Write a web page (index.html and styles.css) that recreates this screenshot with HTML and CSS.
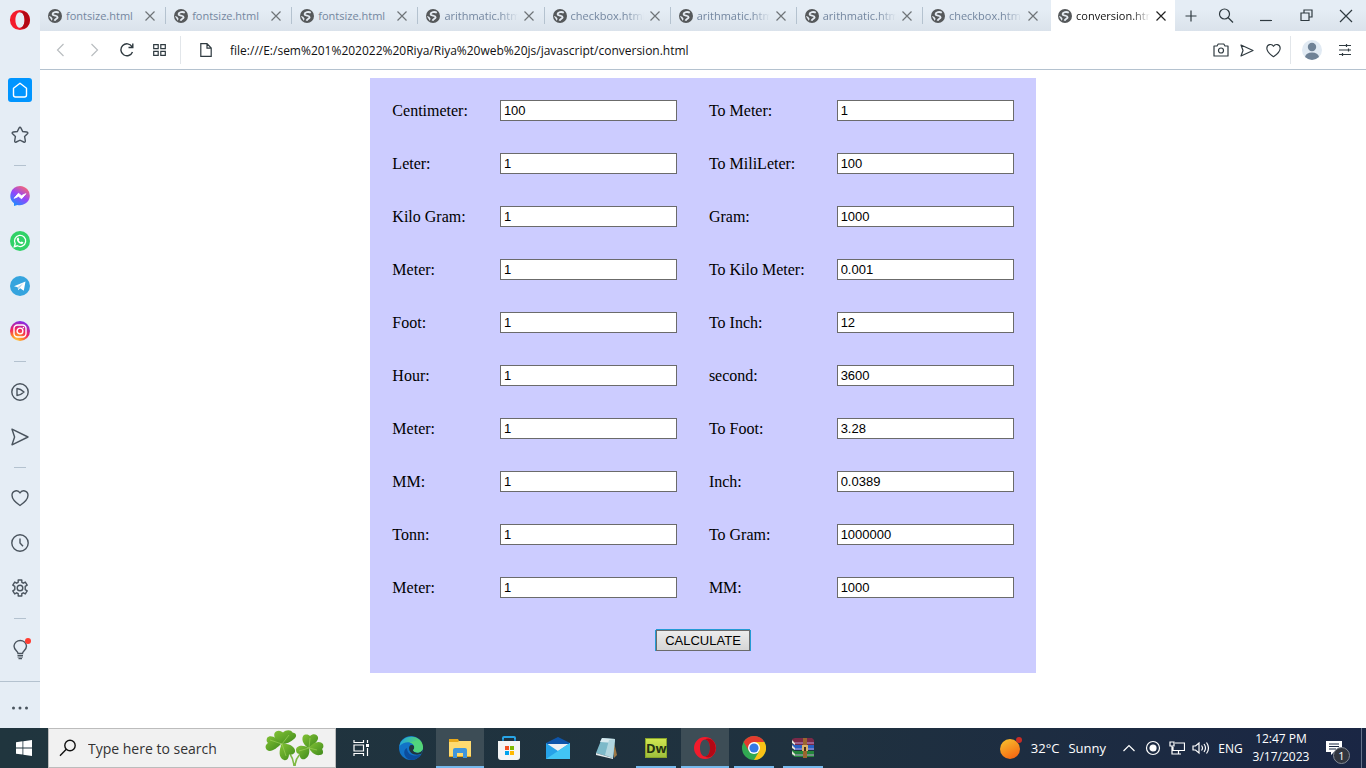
FILE: index.html
```html
<!DOCTYPE html>
<html lang="en">
<head>
<meta charset="utf-8">
<title>conversion.html</title>
<link rel="stylesheet" href="styles.css">
</head>
<body>
<svg class="defs" aria-hidden="true">
  <symbol id="globe" viewBox="0 0 14 14"><circle cx="7" cy="7" r="7" fill="#55585a"/><path d="M10.800 3.700C8.500 2.300 4.800 3.200 4.600 5.200c0 1.800 5 1.200 5 3 0 1.500-2.600 1.500-3 3.600" fill="none" stroke="#e5ebf2" stroke-width="1.900"/><path d="M.8 7l2.400.8 1.400 2-.8 2z" fill="#e5ebf2"/></symbol>
  <symbol id="cross" viewBox="0 0 12 12"><path d="M1.500 1.500l9 9M10.500 1.500l-9 9" fill="none" stroke="currentColor" stroke-width="1.200"/></symbol>
  <symbol id="heart" viewBox="0 0 18 18"><path d="M9 16.500C6 14.500 1 10.500 1 6.300 1 1.500 7 .3 9 4c2-3.700 8-2.500 8 2.300 0 4.200-5 8.200-8 10.200z" fill="none" stroke="currentColor" stroke-width="1.400" stroke-linejoin="round"/></symbol>
  <symbol id="send" viewBox="0 0 18 18"><path d="M1 1.200L17 9 1 16.800 3.600 9z" fill="none" stroke="currentColor" stroke-width="1.400" stroke-linejoin="round"/></symbol>
  <symbol id="opera" viewBox="0 0 24 24"><path fill-rule="evenodd" d="M12 1a11 11 0 1 0 0 22a11 11 0 1 0 0-22zM12 3.500c3 0 5 3.800 5 8.500s-2 8.500-5 8.500S7 16.700 7 12s2-8.500 5-8.500z" fill="#f31b2c"/><path d="M12 3.500c3-2 6-.6 8 1.200a11 11 0 0 1 0 14.600c-2 1.900-5 3.200-8 1.200 3 0 5-3.800 5-8.500s-2-8.500-5-8.500z" fill="#b30815"/></symbol>
</svg>
<div class="browser">
  <nav class="sidebar" aria-label="Sidebar">
    <button class="menu" aria-label="Opera menu"><svg width="22" height="22"><use href="#opera"/></svg></button>
    <button class="side" aria-label="Home"><svg width="24" height="24" viewBox="0 0 24 24"><rect width="24" height="24" rx="3" fill="#0095ff"/><path d="M5.500 10.300L12 5.200l6.500 5.100v6.700q0 2-2 2h-9q-2 0-2-2z" fill="none" stroke="#fff" stroke-width="1.400" stroke-linejoin="round"/></svg></button>
    <button class="side" aria-label="Speed dials"><svg width="18" height="18" viewBox="0 0 18 18"><path d="M8 2.200q1-1.800 2 0l1.700 3.300 4 .5q1.900.4.7 1.800l-2.800 2.800.7 4.100q.2 2-1.600 1.300L9 14.200 5.300 16q-1.800.7-1.600-1.300l.7-4.100-2.800-2.800Q.4 6.400 2.300 6l4-.5z" fill="none" stroke="currentColor" stroke-width="1.400"/></svg></button>
    <hr>
    <button class="side" aria-label="Messenger"><svg width="20" height="20" viewBox="0 0 20 20"><defs><linearGradient id="ms" x1=".2" y1="1" x2=".8" y2="0"><stop offset="0" stop-color="#1593ff"/><stop offset=".5" stop-color="#9445fb"/><stop offset="1" stop-color="#ff6a68"/></linearGradient></defs><path d="M10 0a10 9.600 0 1 1-2.700 18.900L4 20v-2.800A9.700 9.700 0 0 1 10 0z" fill="url(#ms)"/><path d="M4.200 12.300l4.200-5 3 2.400 4.400-2-4.200 5-3-2.400z" fill="#fff" stroke="#fff"/></svg></button>
    <button class="side" aria-label="WhatsApp"><svg width="20" height="20" viewBox="0 0 20 20"><circle cx="10" cy="10" r="10" fill="#30d267"/><path d="M4.300 15.700l.9-3.100a5.600 5.600 0 1 1 2.200 2.200z" fill="none" stroke="#fff" stroke-width="1.300"/><path d="M7.500 6.800l1-.2.800 1.900-.6.800q.8 1.500 2.100 2l.8-.9 1.800.9q0 1.700-1.700 1.800-4.300-.6-5-5z" fill="#fff"/></svg></button>
    <button class="side" aria-label="Telegram"><svg width="20" height="20" viewBox="0 0 20 20"><circle cx="10" cy="10" r="10" fill="#35a4de"/><path d="M4 10.200L15.500 5.500l-1.700 9.300-3.700-2.500-1.900 1.900-.5-3z" fill="#fff"/><path d="M7.800 11l5.500-3.700-3.800 4.600-1.300 2.200z" fill="#b8d7ea"/></svg></button>
    <button class="side" aria-label="Instagram"><svg width="20" height="20" viewBox="0 0 20 20"><defs><radialGradient id="ig" cx=".3" cy="1.050" r="1.100"><stop offset="0" stop-color="#ffdc50"/><stop offset=".3" stop-color="#ff8b24"/><stop offset=".6" stop-color="#f2215f"/><stop offset="1" stop-color="#7b2cf5"/></radialGradient></defs><circle cx="10" cy="10" r="10" fill="url(#ig)"/><rect x="4" y="4" width="12" height="12" rx="3.500" fill="none" stroke="#fff" stroke-width="1.400"/><circle cx="10" cy="10" r="2.900" fill="none" stroke="#fff" stroke-width="1.400"/><circle cx="13.400" cy="6.600" r=".8" fill="#fff"/></svg></button>
    <hr>
    <button class="side" aria-label="Player"><svg width="18" height="18" viewBox="0 0 18 18"><g fill="none" stroke="currentColor" stroke-width="1.400"><circle cx="9" cy="9" r="8.200"/><path d="M6 5.500q3.500.2 7 3.500-3.500 3.300-7 3.500z" stroke-linejoin="round"/></g></svg></button>
    <button class="side" aria-label="My Flow"><svg width="18" height="18"><use href="#send"/></svg></button>
    <hr>
    <button class="side" aria-label="Bookmarks"><svg width="18" height="18"><use href="#heart"/></svg></button>
    <button class="side" aria-label="History"><svg width="18" height="18" viewBox="0 0 18 18"><g fill="none" stroke="currentColor" stroke-width="1.400"><circle cx="9" cy="9" r="8.200"/><path d="M9 4.500V9l3 3.300"/></g></svg></button>
    <button class="side" aria-label="Settings"><svg width="18" height="18" viewBox="0 0 18 18"><g fill="none" stroke="currentColor" stroke-width="1.400" stroke-linejoin="round"><path d="M7.200 1h3.600v2.300l1.500.9 2-1.100 1.900 3-2 1.300v3.200l2 1.300-1.900 3-2-1.100-1.500.9V17H7.200v-2.300l-1.500-.9-2 1.100-1.900-3 2-1.300V7.400l-2-1.300 1.900-3 2 1.100 1.500-.9z"/><circle cx="9" cy="9" r="2.800"/></g></svg></button>
    <hr>
    <button class="side" aria-label="Tips"><svg width="22" height="22" viewBox="0 0 22 22"><path d="M9 15.500c0-2.500-4-3.500-4-7.500a6.300 6.300 0 0 1 12.500 0c0 4-4 5-4 7.500z" fill="none" stroke="currentColor" stroke-width="1.400"/><path d="M8.500 17.500h5.500M8.500 19h5.500M9.500 20.700h3.500" stroke="currentColor" stroke-width="1.200"/><circle cx="19" cy="3" r="3" fill="#ff3b30"/></svg></button>
    <button class="more" aria-label="More"><svg width="18" height="4" viewBox="0 0 18 4" fill="currentColor"><circle cx="2.500" cy="2" r="1.500"/><circle cx="9" cy="2" r="1.500"/><circle cx="15.500" cy="2" r="1.500"/></svg></button>
  </nav>

  <div class="window">
    <header class="tabbar">
      <div class="tabs">
        <div class="tab"><svg class="fav"><use href="#globe"/></svg><a href="#">fontsize.html</a><button aria-label="Close tab"><svg><use href="#cross"/></svg></button></div>
        <div class="tab"><svg class="fav"><use href="#globe"/></svg><a href="#">fontsize.html</a><button aria-label="Close tab"><svg><use href="#cross"/></svg></button></div>
        <div class="tab"><svg class="fav"><use href="#globe"/></svg><a href="#">fontsize.html</a><button aria-label="Close tab"><svg><use href="#cross"/></svg></button></div>
        <div class="tab long"><svg class="fav"><use href="#globe"/></svg><a href="#">arithmatic.html</a><button aria-label="Close tab"><svg><use href="#cross"/></svg></button></div>
        <div class="tab long"><svg class="fav"><use href="#globe"/></svg><a href="#">checkbox.html</a><button aria-label="Close tab"><svg><use href="#cross"/></svg></button></div>
        <div class="tab long"><svg class="fav"><use href="#globe"/></svg><a href="#">arithmatic.html</a><button aria-label="Close tab"><svg><use href="#cross"/></svg></button></div>
        <div class="tab long"><svg class="fav"><use href="#globe"/></svg><a href="#">arithmatic.html</a><button aria-label="Close tab"><svg><use href="#cross"/></svg></button></div>
        <div class="tab long"><svg class="fav"><use href="#globe"/></svg><a href="#">checkbox.html</a><button aria-label="Close tab"><svg><use href="#cross"/></svg></button></div>
        <div class="tab long active"><svg class="fav"><use href="#globe"/></svg><a href="#">conversion.html</a><button aria-label="Close tab"><svg><use href="#cross"/></svg></button></div>
      </div>
      <div class="controls">
        <button class="narrow" aria-label="New tab"><svg width="12" height="12" viewBox="0 0 12 12"><path d="M6 .5v11M.5 6h11"/></svg></button>
        <button aria-label="Search tabs"><svg width="16" height="16" viewBox="0 0 16 16"><circle cx="6.500" cy="6" r="5"/><path d="M10 9.500l5 5"/></svg></button>
        <button aria-label="Minimize"><svg width="12" height="12" viewBox="0 0 12 12"><path d="M0 10.500h12"/></svg></button>
        <button aria-label="Restore"><svg width="13" height="13" viewBox="0 0 13 13"><path d="M4 4V1h8v7H9M1 4h8v7.500H1z"/></svg></button>
        <button aria-label="Close"><svg width="14" height="14" viewBox="0 0 14 14"><path d="M1 1l12 12M13 1L1 13"/></svg></button>
      </div>
    </header>

    <div class="address">
      <button class="off" aria-label="Back"><svg width="14" height="14" viewBox="0 0 14 14"><path d="M9.500 1l-6 6 6 6"/></svg></button>
      <button class="off" aria-label="Forward"><svg width="14" height="14" viewBox="0 0 14 14"><path d="M4.500 1l6 6-6 6"/></svg></button>
      <button aria-label="Reload"><svg width="14" height="14" viewBox="0 0 14 14"><path d="M12.500 9A6 6 0 1 1 12 3.600M12.800.5V4.500H8.500" stroke-width="1.400"/></svg></button>
      <button aria-label="Speed Dial"><svg width="13" height="12" viewBox="0 0 13 12"><path d="M.7.700h4.500v4H.7zM7.800.700h4.500v4H7.800zM.7 7.300h4.500v4H.7zM7.800 7.300h4.500v4H7.800z"/></svg></button>
      <span class="rule"></span>
      <svg class="doc" width="12" height="14" viewBox="0 0 12 14"><path d="M.8.700H7l4.200 4.400v8.200H.8zM7 .7v4.400h4.200"/></svg>
      <input type="text" aria-label="Address" value="file:///E:/sem%201%202022%20Riya/Riya%20web%20js/javascript/conversion.html">
      <div class="tools">
        <button aria-label="Snapshot"><svg width="16" height="14" viewBox="0 0 16 14"><path d="M1 3h3l1.200-2h5.600L12 3h3v10H1z" stroke-linejoin="round"/><circle cx="8" cy="7.500" r="2.500"/></svg></button>
        <button aria-label="Send to My Flow"><svg width="14" height="13" viewBox="0 0 14 13"><path d="M1 1l12 5.500L1 12l2-5.500z" stroke-linejoin="round"/></svg></button>
        <button aria-label="Bookmark"><svg width="15" height="15"><use href="#heart"/></svg></button>
      </div>
      <span class="rule"></span>
      <button class="profile" aria-label="Profile"><svg class="flat" width="20" height="20" viewBox="0 0 20 20"><circle cx="10" cy="10" r="10" fill="#e1eaf3"/><circle cx="10" cy="7" r="4.200" fill="#6f8296"/><path d="M3 17q1-4.500 7-4.500t7 4.500q-7 6-14 0z" fill="#6f8296"/></svg></button>
      <button aria-label="Easy setup"><svg width="12" height="12" viewBox="0 0 12 12"><path d="M0 1.500h12M0 6h12M0 10.500h12M7.500 0v3M9.500 4.500v3M3.500 9v3"/></svg></button>
    </div>

    <main>
      <form>
        <table>
          <tr><td><label for="a1">Centimeter:</label></td><td><input id="a1" type="text" value="100"></td><td><label for="b1">To Meter:</label></td><td><input id="b1" type="text" value="1"></td></tr>
          <tr><td><label for="a2">Leter:</label></td><td><input id="a2" type="text" value="1"></td><td><label for="b2">To MiliLeter:</label></td><td><input id="b2" type="text" value="100"></td></tr>
          <tr><td><label for="a3">Kilo Gram:</label></td><td><input id="a3" type="text" value="1"></td><td><label for="b3">Gram:</label></td><td><input id="b3" type="text" value="1000"></td></tr>
          <tr><td><label for="a4">Meter:</label></td><td><input id="a4" type="text" value="1"></td><td><label for="b4">To Kilo Meter:</label></td><td><input id="b4" type="text" value="0.001"></td></tr>
          <tr><td><label for="a5">Foot:</label></td><td><input id="a5" type="text" value="1"></td><td><label for="b5">To Inch:</label></td><td><input id="b5" type="text" value="12"></td></tr>
          <tr><td><label for="a6">Hour:</label></td><td><input id="a6" type="text" value="1"></td><td><label for="b6">second:</label></td><td><input id="b6" type="text" value="3600"></td></tr>
          <tr><td><label for="a7">Meter:</label></td><td><input id="a7" type="text" value="1"></td><td><label for="b7">To Foot:</label></td><td><input id="b7" type="text" value="3.28"></td></tr>
          <tr><td><label for="a8">MM:</label></td><td><input id="a8" type="text" value="1"></td><td><label for="b8">Inch:</label></td><td><input id="b8" type="text" value="0.0389"></td></tr>
          <tr><td><label for="a9">Tonn:</label></td><td><input id="a9" type="text" value="1"></td><td><label for="b9">To Gram:</label></td><td><input id="b9" type="text" value="1000000"></td></tr>
          <tr><td><label for="a10">Meter:</label></td><td><input id="a10" type="text" value="1"></td><td><label for="b10">MM:</label></td><td><input id="b10" type="text" value="1000"></td></tr>
          <tr><td colspan="4" class="submit"><button type="button">CALCULATE</button></td></tr>
        </table>
      </form>
    </main>
  </div>
</div>

<footer class="taskbar">
  <button class="app" aria-label="Start"><svg width="16" height="16" viewBox="0 0 16 16" fill="#fff"><path d="M0 2.200l6.500-.9v6.200H0zM7.300 1.200L16 0v7.500H7.300zM0 8.400h6.500v6.200L0 13.700zM7.300 8.400H16V16l-8.700-1.200z"/></svg></button>
  <div class="search">
    <svg width="18" height="18" viewBox="0 0 18 18" fill="none" stroke="#111" stroke-width="1.400"><circle cx="11" cy="6.500" r="5.200"/><path d="M7.300 10.200L1 16.800"/></svg>
    <input type="text" aria-label="Search" placeholder="Type here to search">
    <svg width="60" height="36" viewBox="0 0 60 36"><defs><linearGradient id="leaf" x1="0" y1="0" x2="1" y2="1"><stop offset="0" stop-color="#83c235"/><stop offset="1" stop-color="#3f8a1c"/></linearGradient></defs><path d="M16 15q12 8 13 21M44 19q-13 4-14 17" fill="none" stroke="#7fb944" stroke-width="1.600"/><g fill="url(#leaf)"><path d="M17 14C10 12 7 4 11 1.500c3-2 6 0 7 1 3-3 8-3 9.500 0C32 3 32 7 29 9c-3 3-8 5-12 5z"/><path d="M16 14C12 7 5 4 2 8c-1 3 0 4 1 5-3 2-3 5-1 7 4 3 10-2 14-6z"/><path d="M17 14c8-1 14 4 13 8-2 3-4 3-6 2 0 4-2 7-5 6-6-2-5-11-2-16z"/><path d="M44 18C37 15 36 7 39 5c3-1 5 0 6 1 3-3 7-2 8 1 1 4-5 8-9 11z"/><path d="M44 18c4-6 11-8 14-4 1 3 0 4-1 5 2 3 1 6-2 6-5 1-9-3-11-7z"/><path d="M44 18c-7-4-13-2-13 2 0 3 2 4 4 4-1 4 2 6 5 5 4-2 5-7 4-11z"/></g><path d="M5 10l12 4 7-9M17 14l4 12M34 21l10-3 8 2M44 18l1-10" fill="none" stroke="#a4d65e" stroke-width=".6"/></svg>
  </div>
  <div class="apps">
    <button class="app first" aria-label="Task View"><svg width="17" height="16" viewBox="0 0 17 16" fill="none" stroke="#fff" stroke-width="1.200"><path d="M1 0v2.500h9.500V0M1 5h9.500v6H1zM1 16v-2.500h9.500V16M14.500 0v3M14.500 8v8"/><path d="M13 4h3v3h-3z" fill="#fff" stroke="none"/></svg></button>
    <button class="app" aria-label="Edge"><svg width="24" height="24" viewBox="0 0 24 24"><defs><linearGradient id="ed" x1="0" y1=".3" x2="1" y2=".5"><stop offset="0" stop-color="#20a7df"/><stop offset="1" stop-color="#63df55"/></linearGradient></defs><circle cx="12" cy="12" r="12" fill="#1273c7"/><path d="M.5 10C2-2 23-3 24 11c.3 5-6 7-9.500 4-1-1 1-1.500.8-4C15 5 5 4.500.5 10z" fill="url(#ed)"/><path d="M8 12c0 7 7 9 14 6.500A12 12 0 0 1 12 24C5 23 3 14 8 12z" fill="#0c4d9d"/><path d="M11 9.500c-2 2-1 8 5 9 3 .5 5-.3 6.500-.8l1.500-5c-2 5-8 5-9.500 2.300-1-1 1-1.500.8-4-.5-2-2.500-2.500-4.300-1.500z" fill="#21353f"/><path d="M24 11c.3 5-6 7-9.500 4-1-1 1-1.500.8-4-.2-3-3-4-5-4.500L20 4z" fill="#51d47d"/></svg></button>
    <button class="app open lit" aria-label="File Explorer"><svg width="22" height="20" viewBox="0 0 22 20"><path d="M0 1h9l1 2h12v16H0z" fill="#e9a91a"/><path d="M0 4h9l1-1h12v15H0z" fill="#ffdb70"/><path d="M4 12q0-2 2-2h10q2 0 2 2v8h-4v-5H8v5H4z" fill="#3f96dc"/></svg></button>
    <button class="app" aria-label="Microsoft Store"><svg width="24" height="24" viewBox="0 0 24 24"><path d="M6 8V2q0-1 1-1h10q1 0 1 1v6" fill="none" stroke="#28a5e7" stroke-width="2"/><path d="M1 5h22v16q0 3-3 3H4q-3 0-3-3z" fill="#f4f5f5"/><path d="M6 5V3.500M18 5V3.500" stroke="#167bba" stroke-width="2"/><path d="M8 10h4v4H8z" fill="#f25022"/><path d="M13 10h4v4h-4z" fill="#7fba00"/><path d="M8 15h4v4H8z" fill="#00a4ef"/><path d="M13 15h4v4h-4z" fill="#ffb900"/></svg></button>
    <button class="app" aria-label="Mail"><svg width="24" height="22" viewBox="0 0 24 22"><path d="M0 6l12-6 12 6v3H0z" fill="#0e55aa"/><path d="M2 7h20v9H2z" fill="#eef1f3"/><path d="M0 6l12 8L24 6v16H0z" fill="#26a2e8"/><path d="M24 6L0 22h24z" fill="#42c5f4"/></svg></button>
    <button class="app" aria-label="Notepad"><svg width="24" height="24" viewBox="0 0 24 24"><path d="M18 2l4 17-3 3z" fill="#9c7745"/><path d="M7 2l13 1-2 19L1 17z" fill="#7db9c9"/><path d="M7 2l13 1-1 4L5 6z" fill="#d8e9ee"/><path d="M14 4l6-1-2 19-8-3z" fill="#b2d6df"/><path d="M1 17l17 5v1L1 19z" fill="#e6ecee"/></svg></button>
    <button class="app open" aria-label="Dreamweaver"><span class="dw">Dw</span></button>
    <button class="app open lit" aria-label="Opera"><svg width="24" height="24"><use href="#opera"/></svg></button>
    <button class="app open" aria-label="Chrome"><svg width="24" height="24" viewBox="0 0 24 24"><circle cx="12" cy="12" r="12" fill="#31a852"/><path d="M1.600 6A12 12 0 0 1 22.400 6H12v6l-5 3z" fill="#e33b2e"/><path d="M22.400 6A12 12 0 0 1 12 24l5.200-9L12 6z" fill="#fbc116"/><circle cx="12" cy="12" r="6" fill="#fff"/><circle cx="12" cy="12" r="4.600" fill="#3479e6"/></svg></button>
    <button class="app open" aria-label="WinRAR"><svg width="24" height="20" viewBox="0 0 24 20"><path d="M1 1l3-1h17l2 2v5H3z" fill="#7b2948"/><path d="M1 6l3 1h19v5H3z" fill="#2961c4"/><path d="M1 12l3 1h19v6H4l-3-2z" fill="#24863b"/><path d="M1 2l3 3v2L1 5zM1 7l3 3v2L1 10zM1 13l3 3v2l-3-2z" fill="#e8e8dc"/><path d="M4 5h19M4 11h19M4 17h19" stroke="#bf9bd2"/><path d="M12 0h4v20h-4z" fill="#9a6630"/><path d="M11 7h6v6h-6z" fill="#d9b46c"/><path d="M13 9h2v4h-2z" fill="#473016"/></svg></button>
  </div>
  <div class="tray">
    <button class="weather"><svg width="22" height="22" viewBox="0 0 22 22"><defs><linearGradient id="sun" x1="0" y1="0" x2=".5" y2="1"><stop offset="0" stop-color="#f9c52f"/><stop offset="1" stop-color="#f56c14"/></linearGradient></defs><circle cx="10" cy="12" r="10" fill="url(#sun)"/><circle cx="19" cy="3" r="3" fill="#c92c25"/></svg><span>32°C</span><span>Sunny</span></button>
    <button aria-label="Show hidden icons"><svg width="14" height="14" viewBox="0 0 14 14"><path d="M1.500 10L7 4.500l5.500 5.500"/></svg></button>
    <button aria-label="Recorder"><svg width="16" height="16" viewBox="0 0 16 16"><circle cx="8" cy="8" r="6.500"/><circle cx="8" cy="8" r="3" fill="#fff"/></svg></button>
    <button aria-label="Network"><svg width="16" height="14" viewBox="0 0 16 14"><path d="M6 2h9.500v7.500H4V6M1 1h4v4H1zM3 5v8h9M9.500 9.500V13"/></svg></button>
    <button aria-label="Volume"><svg width="18" height="14" viewBox="0 0 18 14"><path d="M1 5h2.500L7 2v10L3.500 9H1zM9.500 4.500q2 2.500 0 5M12 3q3 4 0 8M14.500 1.500q4 5.500 0 11"/></svg></button>
    <button class="lang">ENG</button>
    <button class="clock"><span>12:47 PM</span><span>3/17/2023</span></button>
    <button class="notes" aria-label="1 notification"><svg width="18" height="16" viewBox="0 0 18 16"><path d="M1 1h16v11H9l-3 3v-3H1z" fill="#fff" stroke="none"/><path d="M4 4h10M4 6.500h10M4 9h7" stroke="#1b2843"/></svg><span class="count">1</span></button>
  </div>
</footer>
</body>
</html>
```
FILE: styles.css
```css
* { box-sizing: border-box; }

body {
  margin: 0;
  min-height: 100vh;
  display: flex;
  flex-direction: column;
  background: #fff;
  font-family: "Open Sans", "Noto Sans", sans-serif;
  font-size: 12px;
}

button {
  display: flex;
  align-items: center;
  justify-content: center;
  padding: 0;
  border: 0;
  background: none;
  color: inherit;
  font: inherit;
}

svg { flex: none; }
.defs { position: absolute; width: 0; height: 0; }

.browser { flex: 1; display: flex; }

/* Sidebar */
.sidebar {
  flex: 0 0 40px;
  display: flex;
  flex-direction: column;
  background: #e5edf5;
  color: #4a545e;
}
.menu { height: 40px; margin-bottom: 27px; }
.side { height: 45px; }
.sidebar hr {
  width: 12px;
  height: 1px;
  margin: 8px auto 7px;
  border: 0;
  background: #b4c2cf;
}
.more {
  height: 47px;
  margin-top: auto;
  padding-top: 6px;
  border-top: 1px solid #b4c2cf;
}

/* Tabs */
.window { flex: 1; min-width: 0; display: flex; flex-direction: column; }
.tabbar {
  height: 31px;
  display: flex;
  background: linear-gradient(#e5edf5 30%, #dae2eb);
}
.tabs { flex: 1; min-width: 0; display: flex; }
.tab {
  flex: 1;
  min-width: 0;
  display: flex;
  align-items: center;
  padding: 0 10px 0 8px;
  color: #7487a0;
  background: linear-gradient(#b4c2cf, #b4c2cf) right 7px / 1px 17px no-repeat;
  font-size: 11px;
}
.tab:nth-last-child(2) { background: none; }
.fav { width: 14px; height: 14px; }
.tab a {
  flex: 1;
  min-width: 0;
  margin-left: 4px;
  overflow: hidden;
  white-space: nowrap;
  color: inherit;
  text-decoration: none;
}
.tab.long a {
  margin-right: 5px;
  -webkit-mask-image: linear-gradient(to right, #000 75%, transparent);
  mask-image: linear-gradient(to right, #000 75%, transparent);
}
.tab button svg { width: 12px; height: 12px; }
.tab button { color: #6f7478; }
.tab.active {
  flex: 0 0 124px;
  margin-left: 2px;
  padding: 0 8px 0 7px;
  background: #fff;
  color: #111;
}
.tab.active button { color: #222; }

.controls { display: flex; stroke: #2f3a40; fill: none; stroke-width: 1.200; }
.controls button { width: 40px; }
.controls .narrow { width: 31px; }

/* Address bar */
.address {
  height: 39px;
  display: flex;
  align-items: center;
  padding: 0 5px 0 4px;
  border-bottom: 1px solid #b4c2cf;
  stroke: #2f3a40;
  fill: none;
  stroke-width: 1.200;
  color: #2f3a40;
}
.address button { width: 33px; height: 30px; }
.address .off { stroke: #b9bdc0; }
.address .rule { width: 1px; height: 28px; margin-left: 4px; background: #e2e6ea; }
.address .profile { width: 32px; margin-left: 5px; }
.address .tools { display: flex; }
.address .tools button { width: 26px; }
.flat { stroke: none; }
.doc { margin: 0 18px 0 19px; }
.address input {
  flex: 1;
  min-width: 0;
  border: 0;
  padding: 0;
  font: inherit;
  color: #111;
}

/* Conversion form */
main { flex: 1; padding: 8px; }
table {
  margin: 0 auto;
  padding: 5px;
  border-spacing: 2px;
  background: #ccf;
  font: 16px "Liberation Serif", serif;
}
td { padding: 15px; line-height: 18px; }
td input {
  display: block;
  width: 177px;
  height: 21px;
  padding: 1px 3px;
  border: 1px solid #6b6b6b;
  background: #fff;
  font: 13px "Liberation Sans", sans-serif;
}
.submit button {
  height: 21px;
  margin: 0 auto;
  padding: 0 8px;
  border: 1px solid #6b6b6b;
  box-shadow: 0 -1px #239bd6, -1px 0 #239bd6, 1px 0 #239bd6;
  background: linear-gradient(#ececec, #d5d5d5);
  font: 13px "Liberation Sans", sans-serif;
}

/* Taskbar */
.taskbar {
  height: 40px;
  display: flex;
  background: linear-gradient(to right, #20353e, #1f313f 60%, #1a2644);
  color: #fff;
}
.app { position: relative; width: 48px; height: 40px; }
.search {
  width: 288px;
  display: flex;
  align-items: center;
  padding: 0 10px;
  border: 1px solid #bcbcbc;
  background: #f1f1f1;
}
.search input {
  flex: 1;
  min-width: 0;
  margin-left: 11px;
  padding: 0;
  border: 0;
  background: none;
  font: 14px "Open Sans", "Noto Sans", sans-serif;
}
.search input::placeholder { color: #333; opacity: 1; }
.apps { display: flex; gap: 1px; }
.first { width: 50px; }
.lit { background: #3d4d56; }
.open::after {
  content: "";
  position: absolute;
  left: 4px;
  right: 4px;
  bottom: 0;
  height: 2px;
  background: #76b9ed;
}
.lit::after { left: 0; right: 0; }
.dw {
  width: 22px;
  height: 20px;
  border: 1px solid #8aa52a;
  background: linear-gradient(#d0e650, #9fc03c);
  color: #243212;
  font: bold 13px/18px "Open Sans", sans-serif;
}

.tray {
  margin-left: auto;
  display: flex;
  padding-right: 4px;
  stroke-width: 1.200;
  stroke: #fff;
  fill: none;
}
.tray button { width: 24px; }
.tray .weather { width: auto; gap: 9px; margin-right: 11px; font-size: 13px; }
.weather svg { stroke: none; }
.tray .lang { width: 35px; }
.tray .clock { flex-direction: column; width: 66px; line-height: 18px; }
.tray .notes { position: relative; width: 48px; border-right: 1px solid #66728a; }
.tray .notes svg { margin-right: 8px; }
.count {
  position: absolute;
  left: 19px;
  top: 19px;
  width: 17px;
  height: 17px;
  border: 1px solid #858b95;
  border-radius: 50%;
  background: #32363f;
  font-size: 11px;
  line-height: 15px;
  text-align: center;
}
```
